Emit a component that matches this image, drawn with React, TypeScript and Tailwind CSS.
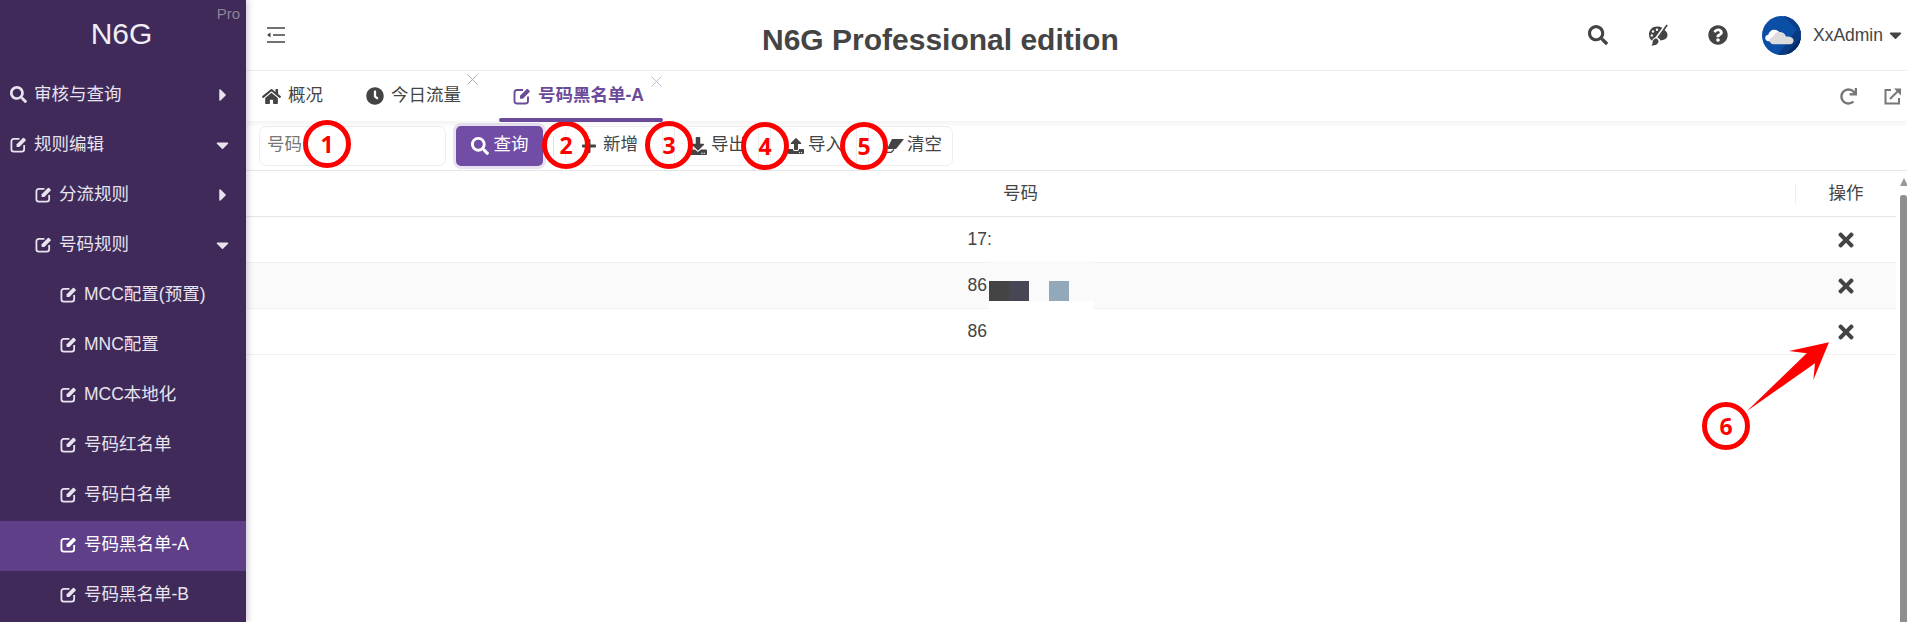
import {
  FaCaretDown,
  FaCaretRight,
  FaClock,
  FaDownload,
  FaHome,
  FaPlus,
  FaQuestionCircle,
  FaRedo,
  FaSearch,
  FaTimes,
  FaUpload,
} from "react-icons/fa";

const fontStack = "font-['Liberation_Sans','Noto_Sans_CJK_SC',sans-serif]";

const menu = [
  { label: "审核与查询", pad: "pl-[10px]", search: true, caret: "right" },
  { label: "规则编辑", pad: "pl-[10px]", caret: "down" },
  { label: "分流规则", pad: "pl-[35px]", caret: "right" },
  { label: "号码规则", pad: "pl-[35px]", caret: "down" },
  { label: "MCC配置(预置)", pad: "pl-[60px]" },
  { label: "MNC配置", pad: "pl-[60px]" },
  { label: "MCC本地化", pad: "pl-[60px]" },
  { label: "号码红名单", pad: "pl-[60px]" },
  { label: "号码白名单", pad: "pl-[60px]" },
  { label: "号码黑名单-A", pad: "pl-[60px]", active: true },
  { label: "号码黑名单-B", pad: "pl-[60px]" },
];

function EditIcon({ className }: { className?: string }) {
  return (
    <svg viewBox="0 0 18 18" className={className} fill="none">
      <path
        d="M10 3H4a2.5 2.5 0 0 0-2.5 2.5V14A2.5 2.5 0 0 0 4 16.5h8.5A2.5 2.5 0 0 0 15 14V9.5"
        stroke="currentColor"
        strokeWidth="1.9"
      />
      <path d="M7 11.7V8.8l6.6-6.6a1 1 0 0 1 1.4 0l1.5 1.5a1 1 0 0 1 0 1.4l-6.6 6.6z" fill="currentColor" />
    </svg>
  );
}

function Sidebar() {
  return (
    <aside className="relative z-10 flex h-[622px] w-[246px] shrink-0 flex-col overflow-hidden bg-[#3f2a5a] text-[#e8e4ee] shadow-[2px_0_6px_rgba(63,42,90,0.25)]">
      <div className="relative flex h-[71px] shrink-0 items-center justify-center pb-[5px] pr-[3px] text-[30px] text-[#f0edf4]">
        N6G
        <span className="absolute right-[6px] top-[3px] text-[15px] text-[#8d8399]">Pro</span>
      </div>
      {menu.map((m) => (
        <div
          key={m.label}
          className={`flex h-[50px] shrink-0 items-center pb-[3px] pr-[17px] text-[17.5px] ${m.pad} ${m.active ? "bg-[#5f4088] text-white" : ""}`}
        >
          {m.search ? <FaSearch className="mr-[7px] size-[17px]" /> : <EditIcon className="mr-[7px] size-[17px]" />}
          <span>{m.label}</span>
          {m.caret === "right" && <FaCaretRight className="ml-auto mr-[2px] h-[20px] w-[8px]" />}
          {m.caret === "down" && <FaCaretDown className="ml-auto h-[20px] w-[13px]" />}
        </div>
      ))}
    </aside>
  );
}

function PaletteIcon() {
  return (
    <svg viewBox="0 0 20 22" className="h-[22px] w-[20px]" fill="#444">
      <path d="M9 2.5C4.3 2.5 1 6 1 10.5c0 2.7 1.2 4.9 3 6.3.7-1.9 1.900-3 3.400-3.600L14.300 3.800C12.800 3 11 2.500 9 2.500z" />
      <path d="M16 5.800 10.800 14.200c.9.5 1.400 1.300 1.500 2.300 3.800-.3 7.200-1.900 7.200-5.500 0-2.200-1.400-3.900-3.500-5.200z" />
      <path d="M18.400 0.500 9.300 13.500l1.500 1L19.800 1.500z" />
      <path d="M7.600 14.500c-1.800.5-2.900 1.900-3 3.900-.1 1.300-.5 2.300-1.400 3 2.800.4 6.500-.4 7.300-3.400.4-1.700-1.200-3.900-2.900-3.500z" />
      <circle cx="5" cy="7.500" r="1.200" fill="#fff" />
      <circle cx="3.800" cy="11.500" r="1.200" fill="#fff" />
      <circle cx="9" cy="5.800" r="1.200" fill="#fff" />
    </svg>
  );
}

function Avatar() {
  return (
    <svg viewBox="0 0 40 40" className="size-[39px]">
      <clipPath id="avatar-clip">
        <circle cx="20" cy="20" r="20" />
      </clipPath>
      <g clipPath="url(#avatar-clip)">
        <rect width="40" height="40" fill="#0b4ea6" />
        <path d="M16 40 40 8v32z" fill="#0a3a80" />
        <path d="M24 40 40 22v18z" fill="#062a63" />
        <path d="M22 0h18v18z" fill="#0a3f8a" />
        <path d="M7 26c-2.400 0-3.700-1.600-3.700-3.400 0-1.900 1.400-3.200 3.200-3.300.6-3.200 3.200-5.300 6.200-5.300 2.200 0 4 1 5.200 2.700 4 .2 6 2 6.400 4.500L13 26z" fill="#fff" />
        <path d="M12 29c-2.600 0-4.200-1.700-4.200-3.800 0-2 1.500-3.600 3.600-3.700.8-3 3.400-5 6.500-5 3 0 5.500 1.800 6.500 4.500 3.600-.3 8 .6 8 4.200 0 2.300-1.700 3.800-4 3.800z" fill="#dcdcdc" />
      </g>
    </svg>
  );
}

function Header() {
  return (
    <header className="flex h-[71px] shrink-0 items-center border-b border-[#eeeeee] pl-[21px] pr-[5px]">
      <svg viewBox="0 0 18 16" className="h-[16px] w-[18px]" stroke="#444" strokeWidth="1.700" fill="none">
        <path d="M0 1h18M6 8h12M0 15h18" />
        <path d="M0 8l3.500-2.500v5z" fill="#444" stroke="none" />
      </svg>
      <h1 className="ml-[477px] mt-[9px] text-[30px] font-bold leading-none text-[#444]">N6G Professional edition</h1>
      <div className="ml-auto flex items-center text-[#444]">
        <FaSearch className="size-[20px]" />
        <div className="ml-[40px]">
          <PaletteIcon />
        </div>
        <FaQuestionCircle className="ml-[40px] size-[20px]" />
        <div className="ml-[34px]">
          <Avatar />
        </div>
        <span className="ml-[12px] text-[17.5px]">XxAdmin</span>
        <FaCaretDown className="ml-[6px] h-[20px] w-[13px]" />
      </div>
    </header>
  );
}

function TabClose({ className }: { className: string }) {
  return (
    <svg viewBox="0 0 11 11" className={`absolute size-[11px] ${className}`} stroke="currentColor" strokeWidth="1" fill="none">
      <path d="M.5.5l10 10M10.500.5l-10 10" />
    </svg>
  );
}

function Tabs() {
  return (
    <nav className="relative z-[1] flex h-[50px] shrink-0 items-center pl-[16px] pr-[5px] text-[17.5px] text-[#444] shadow-[0_3px_5px_rgba(0,0,0,0.05)]">
      <div className="flex items-center gap-[7px]">
        <FaHome className="size-[19px]" />
        <span className="pb-[2px]">概况</span>
      </div>
      <div className="relative ml-[43px] flex items-center gap-[7px]">
        <FaClock className="size-[18px]" />
        <span className="pb-[2px]">今日流量</span>
        <TabClose className="-right-[17px] -top-[8px] text-[#aaa]" />
      </div>
      <div className="relative ml-[38px] flex h-full w-[164px] items-center gap-[7px] pl-[14px] font-bold text-[#6b4a9a]">
        <EditIcon className="size-[18px]" />
        <span className="pb-[2px]">号码黑名单-A</span>
        <TabClose className="right-[1px] top-[5px] text-[#c5b8d8]" />
        <div className="absolute bottom-[-1px] left-0 right-0 h-[4px] rounded-full bg-[#6b4a9a]" />
      </div>
      <FaRedo className="ml-auto size-[17px] text-[#777]" />
      <svg viewBox="0 0 18 18" className="ml-[27px] size-[18px]" fill="none" stroke="#777" strokeWidth="2">
        <path d="M7 3H1.500v13.500H15V11" />
        <path d="M6 12 15 3" />
        <path d="M10 1.500h7v7z" fill="#777" stroke="none" />
      </svg>
    </nav>
  );
}

function EraserIcon() {
  return (
    <svg viewBox="0 0 22 14" className="h-[14px] w-[22px]">
      <path d="M10 0h12l-8 10H5z" fill="#444" />
      <path d="M5 9 1.500 12.500l1 1H9l3-3" fill="none" stroke="#444" strokeWidth="1.300" />
    </svg>
  );
}

const actions = [
  { label: "新增", icon: <FaPlus className="size-[16px]" />, cls: "w-[97px] pl-[15px] gap-[6px] border-r" },
  { label: "导出", icon: <FaDownload className="size-[18px]" />, cls: "ml-[11px] w-[85px] pl-[14px] gap-[4px] border-x" },
  { label: "导入", icon: <FaUpload className="size-[16px]" />, cls: "ml-[11px] w-[87px] pl-[17px] gap-[4px] border-x" },
  { label: "清空", icon: <EraserIcon />, cls: "ml-[11px] pl-[13px] gap-[3px] border-l" },
];

function Toolbar() {
  return (
    <div className="flex h-[50px] shrink-0 items-center border-b border-[#e6e6e6] pl-[13px] text-[17.5px] text-[#444]">
      <div className="flex h-[40px] w-[187px] items-center rounded-[7px] border border-[#eeeeee] pb-[2px] pl-[7px] text-[#777]">号码</div>
      <button className="ml-[10px] flex h-[40px] w-[87px] items-center justify-center gap-[5px] rounded-[5px] bg-[#714da6] text-white shadow-[0_0_0_3px_#e8e3f0]">
        <FaSearch className="size-[18px]" />
        <span className="pb-[2px]">查询</span>
      </button>
      <div className="ml-[10px] h-[20px] w-px bg-[#e0e0e0]" />
      <div className="ml-[11px] flex h-[40px] w-[388px] items-center rounded-[7px] border border-[#eeeeee]">
        {actions.map((a) => (
          <div key={a.label} className={`flex h-full items-center border-[#eeeeee] ${a.cls}`}>
            {a.icon}
            <span className="pb-[2px]">{a.label}</span>
          </div>
        ))}
      </div>
    </div>
  );
}

const rows = [
  { num: "17:", shade: false },
  { num: "86", shade: true },
  { num: "86", shade: false },
];

function DataTable() {
  return (
    <div className="flex flex-1">
      <div className="flex-1 text-[17.5px] text-[#444]">
        <div className="flex h-[46px] items-center border-b border-[#e6e6e6]">
          <div className="flex-1 text-center">号码</div>
          <div className="h-[20px] w-px bg-[#eeeeee]" />
          <div className="w-[100px] text-center">操作</div>
        </div>
        {rows.map((r, i) => (
          <div key={i} className={`flex h-[46px] items-center border-b border-[#f0f0f0] ${r.shade ? "bg-[#fafafa]" : ""}`}>
            <div className="flex flex-1 justify-center">
              <div className="w-[106px]">{r.num}</div>
            </div>
            <div className="flex w-[101px] justify-center">
              <FaTimes className="size-[22px]" />
            </div>
          </div>
        ))}
      </div>
      {/* scrollbar */}
      <div className="relative w-[11px] shrink-0">
        <div className="absolute left-[4px] top-[7px] h-0 w-0 border-x-[4px] border-b-[8px] border-x-transparent border-b-[#999]" />
        <div className="absolute bottom-0 left-[4px] right-0 top-[24px] rounded-t-[3px] bg-[#8f8f8f]" />
      </div>
    </div>
  );
}

function Marker({ n, cls }: { n: number; cls: string }) {
  return (
    <div className={`absolute flex size-[48px] items-center justify-center rounded-full border-[5px] border-[#ff0000] font-['Open_Sans',sans-serif] text-[23px] font-bold text-[#ff0000] ${cls}`}>
      {n}
    </div>
  );
}

export default function App() {
  return (
    <div className={`relative flex h-[622px] w-[1907px] overflow-hidden bg-white ${fontStack}`}>
      <Sidebar />
      <main className="flex min-w-0 flex-1 flex-col">
        <Header />
        <Tabs />
        <Toolbar />
        <DataTable />
      </main>

      {/* redaction patch */}
      <div className="absolute left-[989px] top-[261px] h-[49px] w-[105px] bg-white">
        <div className="flex h-[40px] items-end bg-[#fafafa]">
          <div className="h-[20px] w-[20px] bg-[#444444]" />
          <div className="h-[20px] w-[20px] bg-[#464655]" />
          <div className="ml-[20px] h-[20px] w-[20px] bg-[#92a9bb]" />
        </div>
      </div>

      {/* annotations */}
      <Marker n={1} cls="left-[303px] top-[120px]" />
      <Marker n={2} cls="left-[542px] top-[121px]" />
      <Marker n={3} cls="left-[645px] top-[121px]" />
      <Marker n={4} cls="left-[741px] top-[122px]" />
      <Marker n={5} cls="left-[840px] top-[122px]" />
      <Marker n={6} cls="left-[1702px] top-[402px]" />
      <svg className="absolute left-[1740px] top-[335px]" width="100" height="85" viewBox="0 0 100 85">
        <path d="M7 76 66.700 18.300 49 16 89 7.300 73.300 45 75 28.300z" fill="#ff0000" />
      </svg>
    </div>
  );
}
